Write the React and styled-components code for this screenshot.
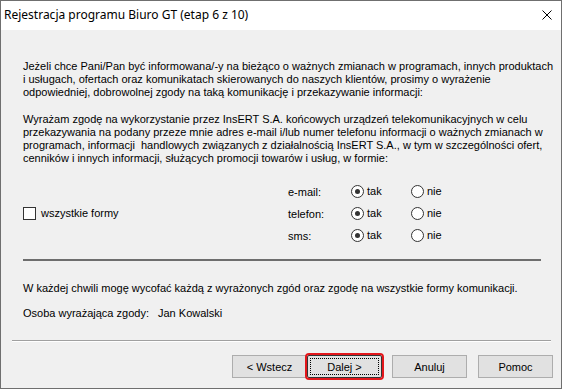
import React from 'react';
import styled, { createGlobalStyle } from 'styled-components';

const GlobalStyle = createGlobalStyle`
  html, body {
    margin: 0;
    padding: 0;
    background: #ffffff;
  }
  body {
    font-family: 'Liberation Sans', Arial, sans-serif;
    font-size: 11px;
    color: #000;
  }
`;

const Window = styled.div`
  width: 560px;
  height: 387px;
  border: 1px solid #6f6f6f;
  display: flex;
  flex-direction: column;
  background: #f0f0f0;
`;

const TitleBar = styled.div`
  height: 29px;
  background: #fff;
  display: flex;
  align-items: center;
  justify-content: space-between;
  padding: 0 8px 0 3px;
  flex-shrink: 0;
`;

const Title = styled.div`
  font-family: 'Noto Sans', 'Open Sans', sans-serif;
  font-size: 12px;
  color: #000;
  margin-top: -2px;
`;

const CloseButton = styled.div`
  width: 10px;
  height: 10px;
  margin-right: 1px;
  margin-top: -2px;
  display: flex;
`;

const Body = styled.div`
  flex: 1;
  display: flex;
  flex-direction: column;
  padding-top: 30px;
`;

const Content = styled.div`
  padding-left: 22px;
`;

const Paragraph = styled.p`
  margin: 0 0 ${({ gap }) => gap || 0}px;
  line-height: 13px;
  white-space: nowrap;
`;

const Consent = styled.div`
  display: flex;
  align-items: center;
  margin-top: 15px;
`;

const CheckArea = styled.label`
  width: 265px;
  display: flex;
  align-items: center;
  gap: 5px;
`;

const CheckBox = styled.span`
  width: 11px;
  height: 11px;
  border: 1px solid #333;
  background: #fff;
  flex-shrink: 0;
`;

const ChannelGrid = styled.div`
  display: grid;
  grid-template-columns: 63px 60px 60px;
  grid-auto-rows: 22px;
  align-items: center;
`;

const ChannelLabel = styled.span`
  padding-top: 2px;
`;

const Option = styled.span`
  display: flex;
  align-items: center;
  gap: 3px;
`;

const Radio = styled.span`
  width: 11px;
  height: 11px;
  border: 1px solid #333;
  border-radius: 50%;
  background: #fff;
  display: flex;
  align-items: center;
  justify-content: center;
  flex-shrink: 0;

  &::after {
    content: '';
    width: 5px;
    height: 5px;
    border-radius: 50%;
    background: ${({ checked }) => (checked ? '#333' : 'transparent')};
  }
`;

const Separator = styled.div`
  margin: 13px 0 0 22px;
  width: 518px;
  height: 2px;
  background: #6d6d6d;
`;

const Footer = styled.div`
  padding-left: 22px;
  margin-top: 21px;
`;

const PersonRow = styled.div`
  display: flex;
  line-height: 13px;
  margin-top: 12px;
`;

const PersonLabel = styled.span`
  width: 135px;
`;

const EtchedLine = styled.div`
  margin: 20px 0 0 11px;
  width: 539px;
  height: 1px;
  background: #a0a0a0;
  border-bottom: 1px solid #fff;
`;

const ButtonBar = styled.div`
  display: flex;
  justify-content: flex-end;
  padding-right: 8px;
  margin-top: 13px;
`;

const Button = styled.button`
  width: 75px;
  height: 23px;
  margin-left: ${({ gap }) => gap || 0}px;
  background: #e1e1e1;
  border: 1px solid #adadad;
  font-family: 'Liberation Sans', Arial, sans-serif;
  font-size: 11px;
  color: #000;
  padding: 0;
  position: relative;
`;

const DefaultButton = styled(Button)`
  border: 1px solid #333;
  outline: 2px solid #e3161b;
  outline-offset: 0px;
  border-radius: 2px;

  &::before {
    content: '';
    position: absolute;
    inset: 2px;
    border: 1px dotted #000;
  }
`;

const channels = ['e-mail:', 'telefon:', 'sms:'];

const App = () => {
  return (
    <>
      <GlobalStyle />
      <Window>
        <TitleBar>
          <Title>Rejestracja programu Biuro GT (etap 6 z 10)</Title>
          <CloseButton>
            <svg width="10" height="10" viewBox="0 0 10 10">
              <path d="M0.5 0.5 L9.5 9.5 M9.5 0.5 L0.5 9.5" stroke="#000" strokeWidth="1" />
            </svg>
          </CloseButton>
        </TitleBar>
        <Body>
          <Content>
            <Paragraph gap={14}>
              Jeżeli chce Pani/Pan być informowana/-y na bieżąco o ważnych zmianach w programach, innych produktach
              <br />
              i usługach, ofertach oraz komunikatach skierowanych do naszych klientów, prosimy o wyrażenie
              <br />
              odpowiedniej, dobrowolnej zgody na taką komunikację i przekazywanie informacji:
            </Paragraph>
            <Paragraph>
              Wyrażam zgodę na wykorzystanie przez InsERT S.A. końcowych urządzeń telekomunikacyjnych w celu
              <br />
              przekazywania na podany przeze mnie adres e-mail i/lub numer telefonu informacji o ważnych zmianach w
              <br />
              programach, informacji&nbsp; handlowych związanych z działalnością InsERT S.A., w tym w szczególności ofert,
              <br />
              cenników i innych informacji, służących promocji towarów i usług, w formie:
            </Paragraph>
            <Consent>
              <CheckArea>
                <CheckBox />
                wszystkie formy
              </CheckArea>
              <ChannelGrid>
                {channels.map((c) => (
                  <React.Fragment key={c}>
                    <ChannelLabel>{c}</ChannelLabel>
                    <Option>
                      <Radio checked />
                      tak
                    </Option>
                    <Option>
                      <Radio />
                      nie
                    </Option>
                  </React.Fragment>
                ))}
              </ChannelGrid>
            </Consent>
          </Content>
          <Separator />
          <Footer>
            <Paragraph>
              W każdej chwili mogę wycofać każdą z wyrażonych zgód oraz zgodę na wszystkie formy komunikacji.
            </Paragraph>
            <PersonRow>
              <PersonLabel>Osoba wyrażająca zgody:</PersonLabel>
              <span>Jan Kowalski</span>
            </PersonRow>
          </Footer>
          <EtchedLine />
          <ButtonBar>
            <Button>&lt; Wstecz</Button>
            <DefaultButton>Dalej &gt;</DefaultButton>
            <Button gap={10}>Anuluj</Button>
            <Button gap={11}>Pomoc</Button>
          </ButtonBar>
        </Body>
      </Window>
    </>
  );
};

export default App;
